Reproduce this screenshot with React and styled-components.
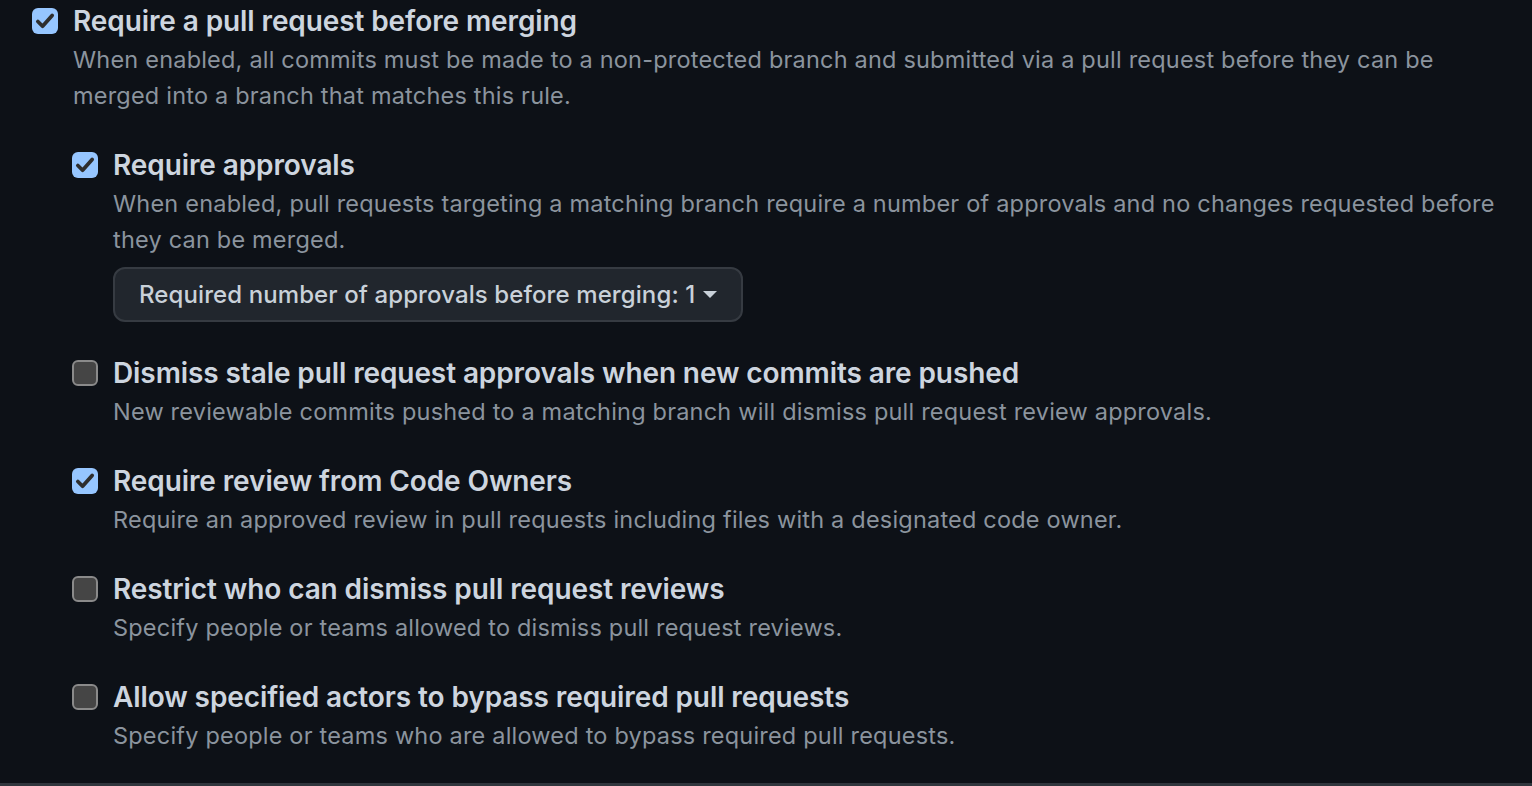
import React from "react";
import styled, { createGlobalStyle } from "styled-components";

const GlobalStyle = createGlobalStyle`
  html, body { margin: 0; padding: 0; background: #0d1117; }
  body { font-family: Inter, "Noto Sans", "Liberation Sans", sans-serif; -webkit-font-smoothing: antialiased; }
  * { box-sizing: border-box; }
`;

const Page = styled.div`
  height: 786px;
  overflow: hidden;
  background: #0d1117;
  border-bottom: 3px solid #30363d;
  padding: 0 22px 0 32px;
`;

const List = styled.div`
  display: flex;
  flex-direction: column;
  gap: 30px;
  margin-top: ${(p) => (p.$nested ? "30px" : "0")};
  padding-left: ${(p) => (p.$nested ? "40px" : "0")};
`;

const Row = styled.div`
  display: grid;
  grid-template-columns: 26px 1fr;
  column-gap: 15px;
  align-items: start;
`;

const Sub = styled.div`
  grid-column: 1 / -1;
`;

const Box = styled.span`
  width: 26px;
  height: 26px;
  margin-top: 8px;
  border-radius: 6px;
  display: flex;
  align-items: center;
  justify-content: center;
  background: ${(p) => (p.$checked ? "#96c6ff" : "#454545")};
  border: ${(p) => (p.$checked ? "none" : "2px solid #8a8a8a")};
`;

const Body = styled.div`
  display: flex;
  flex-direction: column;
  align-items: flex-start;
`;

const Title = styled.div`
  font-size: 28px;
  line-height: 42px;
  font-weight: 600;
  color: #cdd5df;
  letter-spacing: -0.1px;
`;

const Desc = styled.div`
  font-size: 23.5px;
  line-height: 36px;
  color: #8b949e;
  letter-spacing: 0.2px;
`;

const Button = styled.button`
  margin-top: 9px;
  height: 55px;
  padding: 0 24px;
  display: flex;
  align-items: center;
  gap: 8px;
  background: #21262d;
  border: 2px solid #363b42;
  border-radius: 12px;
  color: #c9d1d9;
  font-family: inherit;
  font-size: 24px;
  font-weight: 500;
  letter-spacing: 0.1px;
`;

const Caret = styled.span`
  width: 0;
  height: 0;
  border-left: 7px solid transparent;
  border-right: 7px solid transparent;
  border-top: 7px solid #c9d1d9;
`;

function Checkbox({ checked }) {
  return (
    <Box $checked={checked}>
      {checked && (
        <svg width="22" height="22" viewBox="0 0 20 20">
          <path d="M3.5 10.5 L7.8 14.8 L16.5 5" fill="none" stroke="#2e2e2e" strokeWidth="3.4" strokeLinecap="round" strokeLinejoin="round" />
        </svg>
      )}
    </Box>
  );
}

function Option({ checked, title, desc, extra, children }) {
  return (
    <Row>
      <Checkbox checked={checked} />
      <Body>
        <Title>{title}</Title>
        <Desc>{desc}</Desc>
        {extra}
      </Body>
      {children && <Sub>{children}</Sub>}
    </Row>
  );
}

export default function App() {
  return (
    <>
      <GlobalStyle />
      <Page>
        <Option
          checked
          title="Require a pull request before merging"
          desc="When enabled, all commits must be made to a non-protected branch and submitted via a pull request before they can be merged into a branch that matches this rule."
        >
          <List $nested>
            <Option
              checked
              title="Require approvals"
              desc="When enabled, pull requests targeting a matching branch require a number of approvals and no changes requested before they can be merged."
              extra={
                <Button>
                  Required number of approvals before merging: 1
                  <Caret />
                </Button>
              }
            />
            <Option
              title="Dismiss stale pull request approvals when new commits are pushed"
              desc="New reviewable commits pushed to a matching branch will dismiss pull request review approvals."
            />
            <Option
              checked
              title="Require review from Code Owners"
              desc="Require an approved review in pull requests including files with a designated code owner."
            />
            <Option
              title="Restrict who can dismiss pull request reviews"
              desc="Specify people or teams allowed to dismiss pull request reviews."
            />
            <Option
              title="Allow specified actors to bypass required pull requests"
              desc="Specify people or teams who are allowed to bypass required pull requests."
            />
          </List>
        </Option>
      </Page>
    </>
  );
}
